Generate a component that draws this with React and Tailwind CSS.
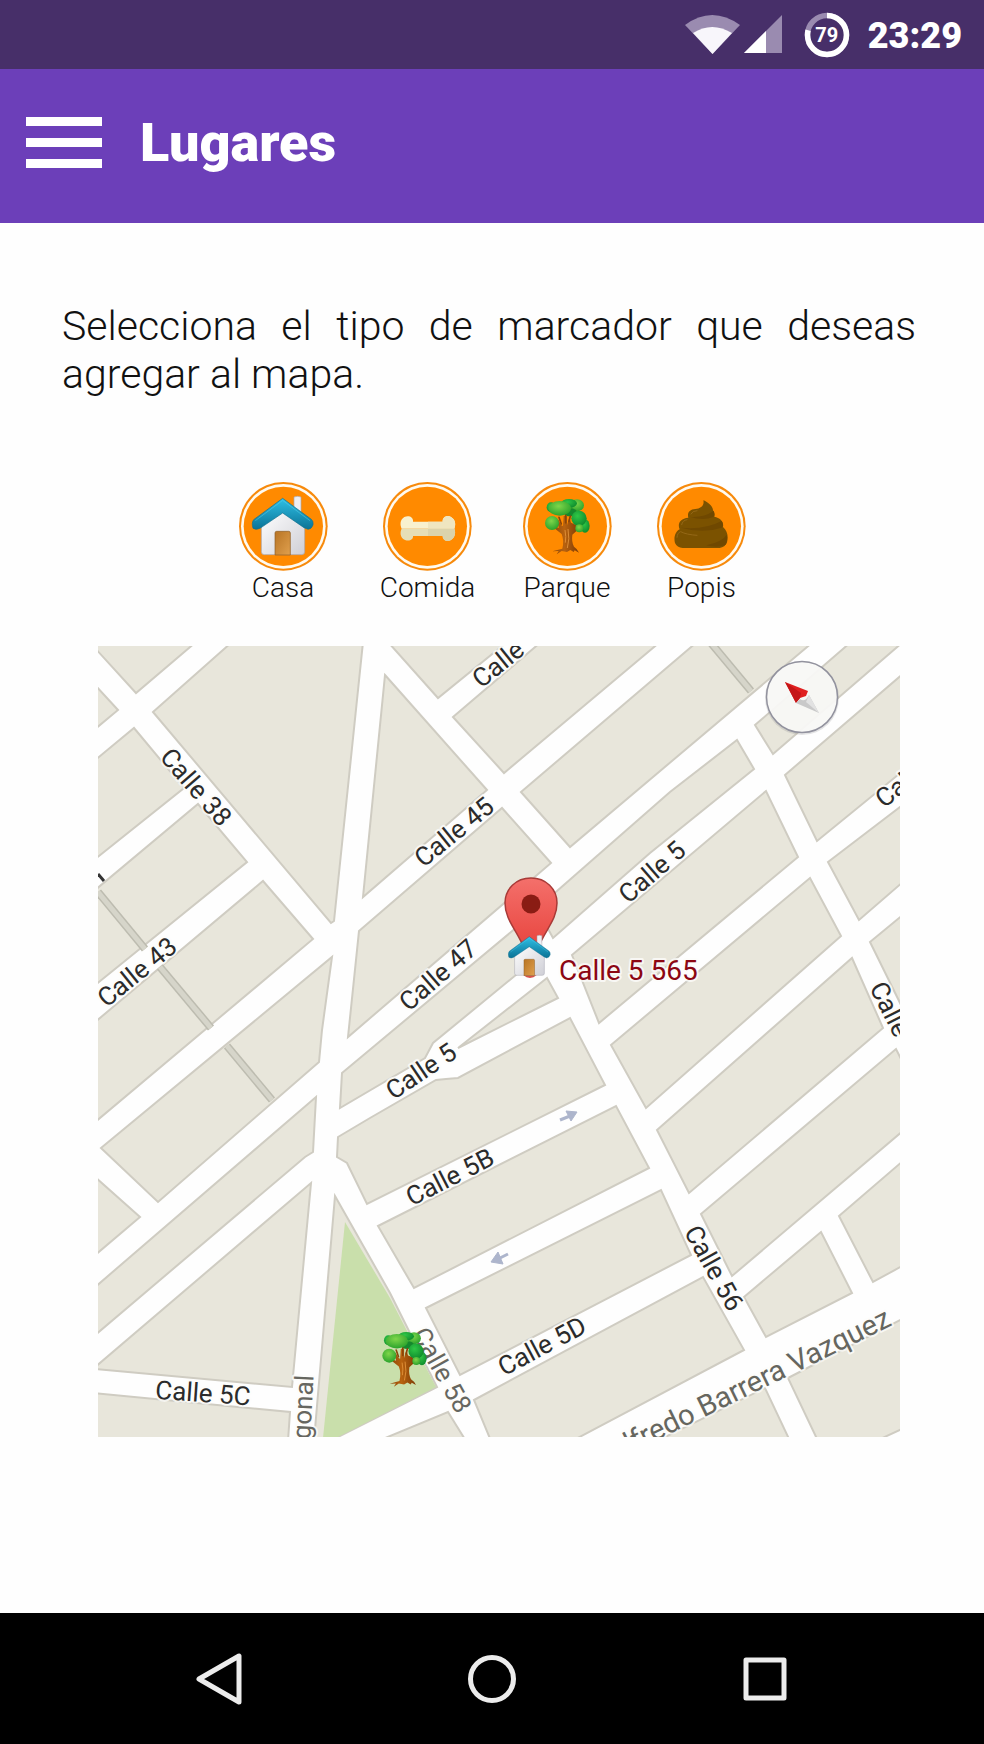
const BLOCKS = [
  '94,642 196,642 136,693 94,647',
  '94,684 118,710 94,730',
  '153,712 232,642 363,642 334,921 331,923',
  '94,761 134,728 184,788 94,860',
  '94,891 198,804 247,862 94,986',
  '94,1023 263,881 313,939 94,1123',
  '101,1148 332,957 322,1030 319,1062 158,1202',
  '94,1176 140,1217 94,1256',
  '94,1288 316,1097 313,1152 305,1157 94,1336',
  '94,1368 311,1183 292,1387 94,1369',
  '94,1393 290,1412 288,1441 94,1441',
  '335,1196 390,1293 437,1387 330,1441 314,1441',
  '385,675 487,790 363,897',
  '388,642 507,642 438,698',
  '453,717 541,642 660,642 504,773',
  '521,792 697,642 813,642 570,847',
  '359,931 502,808 551,863 348,1037',
  '536,907 557,891 670,792 737,740 754,769 650,853 553,938',
  '342,1073 517,927 528,965 433,1043 425,1058 340,1108',
  '458,1048 547,978 558,998',
  '338,1137 370,1118 436,1080 446,1079 458,1078 570,1018 605,1085 367,1204 347,1163 337,1157',
  '378,1226 616,1106 649,1168 414,1288',
  '426,1308 661,1190 691,1255 460,1375',
  '474,1400 703,1277 744,1350 572,1441 491,1441',
  '378,1441 448,1412 466,1441',
  '572,955 766,791 798,857 599,1023',
  '611,1045 810,878 841,936 646,1108',
  '657,1130 852,958 883,1028 689,1193',
  '701,1214 896,1049 904,1065 904,1130 732,1276',
  '744,1297 821,1232 852,1293 766,1337',
  '839,1216 904,1160 904,1265 873,1282',
  '788,1378 904,1318 904,1428 876,1441 818,1441',
  '657,1441 765,1388 790,1441',
  '755,725 851,642 903,642 773,754',
  '785,775 904,673 904,770 817,841',
  '828,862 904,804 904,881 859,920',
  '870,942 904,914 904,1011',
];

const RAILS = [
  [98, 892, 145, 949],
  [160, 967, 211, 1028],
  [227, 1046, 272, 1100],
  [711, 643, 751, 691],
];

const LABELS = [
  { text: 'Calle 38', x: 196, y: 787, angle: 49 },
  { text: 'Calle 43', x: 137, y: 972, angle: -39 },
  { text: 'Calle 45', x: 454, y: 832, angle: -39 },
  { text: 'Calle 47', x: 438, y: 975, angle: -41 },
  { text: 'Calle', x: 498, y: 664, angle: -39 },
  { text: 'Calle 5', x: 652, y: 872, angle: -41 },
  { text: 'Calle 5', x: 421, y: 1071, angle: -34 },
  { text: 'Calle 5B', x: 450, y: 1177, angle: -27 },
  { text: 'Calle 5D', x: 542, y: 1346, angle: -28 },
  { text: 'Calle 5C', x: 203, y: 1393, angle: 4 },
  { text: 'Calle 58', x: 442, y: 1370, angle: 61, soft: true },
  { text: 'Calle 56', x: 714, y: 1268, angle: 61 },
  { text: 'Calle', x: 890, y: 1009, angle: 63 },
  { text: 'Calle', x: 901, y: 784, angle: -38 },
  { text: 'gonal', x: 303, y: 1407, angle: -87, soft: true },
];

function Gradients() {
  return (
    <svg className="absolute h-0 w-0" aria-hidden="true">
      <defs>
        <linearGradient id="roof" x1="0" y1="0" x2="0" y2="1">
          <stop offset="0" stopColor="#2fc0e6" />
          <stop offset="1" stopColor="#0b7396" />
        </linearGradient>
        <linearGradient id="wall" x1="0" y1="0" x2="1" y2="1">
          <stop offset="0" stopColor="#ffffff" />
          <stop offset="1" stopColor="#cfcfd6" />
        </linearGradient>
        <linearGradient id="door" x1="0" y1="0" x2="1" y2="1">
          <stop offset="0" stopColor="#b87424" />
          <stop offset="1" stopColor="#e0a04e" />
        </linearGradient>
        <radialGradient id="leaf" cx=".45" cy=".35" r=".65">
          <stop offset="0" stopColor="#7fd64a" />
          <stop offset="1" stopColor="#2ba32c" />
        </radialGradient>
        <radialGradient id="leafDark" cx=".4" cy=".35" r=".7">
          <stop offset="0" stopColor="#2fc746" />
          <stop offset="1" stopColor="#0e8a2c" />
        </radialGradient>
        <linearGradient id="trunk" x1="0" y1="0" x2="1" y2="0">
          <stop offset="0" stopColor="#8a4508" />
          <stop offset=".45" stopColor="#b8620f" />
          <stop offset="1" stopColor="#7d3b05" />
        </linearGradient>
        <linearGradient id="pin" x1="0" y1="0" x2="0" y2="1">
          <stop offset="0" stopColor="#f4706b" />
          <stop offset="1" stopColor="#e8453f" />
        </linearGradient>
      </defs>
    </svg>
  );
}

function House() {
  return (
    <g>
      <path d="M222 111 Q232 107 243 111 V160 L222 142 Z" fill="#eeeef2" stroke="#a9a9b3" strokeWidth="2" />
      <path d="M124 198 L188 150 L254 200 V275 Q254 284 245 284 H133 Q124 284 124 275 Z" fill="url(#wall)" stroke="#a3a3ad" strokeWidth="2" />
      <path d="M165 285 V219 Q165 214 170 214 H206 Q211 214 211 219 V285 Z" fill="url(#door)" stroke="#8d5c24" strokeWidth="2" />
      <path
        d="M188 115 L274 178 Q281 184 279 195 Q274 208 264 208 L252 203 L188 159 L120 205 Q108 211 99 205 Q94 188 101 179 Z"
        fill="url(#roof)"
        stroke="#0f6f8e"
        strokeWidth="2"
        strokeLinejoin="round"
      />
      <path d="M106 182 L188 121 L270 182" fill="none" stroke="#5fd3ee" strokeWidth="2" opacity=".7" />
    </g>
  );
}

function Tree() {
  return (
    <g>
      <ellipse cx="260" cy="134" rx="21" ry="18" fill="url(#leaf)" />
      <ellipse cx="236" cy="128" rx="24" ry="13" fill="url(#leafDark)" />
      <ellipse cx="284" cy="196" rx="14" ry="20" fill="url(#leafDark)" />
      <ellipse cx="182" cy="140" rx="13" ry="15" fill="url(#leafDark)" />
      <ellipse cx="240" cy="155" rx="20" ry="12" fill="#15882d" />
      <path
        d="M216 264 Q222 240 214 220 L194 204 L192 197 L206 202 L200 182 L204 177 L213 194 L218 196 L220 166 L230 166 L230 194 L237 170 L242 186 L256 192 L262 208 L255 214 L246 222 Q243 244 251 258 Q261 264 266 276 L253 269 L250 274 L240 268 L230 274 L214 271 L199 281 L205 271 L186 272 Z"
        fill="url(#trunk)"
      />
      <path d="M233 205 Q239 235 231 262 M224 208 Q228 228 225 246" fill="none" stroke="#dd8d36" strokeWidth="3" />
      <ellipse cx="185" cy="187" rx="21" ry="21" fill="url(#leaf)" />
      <ellipse cx="208" cy="143" rx="34" ry="22" fill="url(#leaf)" />
      <ellipse cx="266" cy="173" rx="23" ry="23" fill="url(#leafDark)" />
      <circle cx="267" cy="203" r="12" fill="url(#leaf)" />
      <path d="M213 190 L206 170 M226 186 V164 M236 182 L240 166" fill="none" stroke="#8a4508" strokeWidth="5" strokeLinecap="round" />
    </g>
  );
}

function Bone() {
  return (
    <g>
      <path
        d="M579 183 H668 C667 168 683 162 693 169 C708 177 707 194 703 204 H545 C540 194 539 177 553 169 C566 163 581 169 579 183 Z"
        fill="#f8f1cf"
      />
      <path
        d="M579 226 H668 C668 241 684 244 693 238 C707 229 707 213 703 204 H545 C540 213 539 231 555 238 C568 243 580 237 579 226 Z"
        fill="#e6deb6"
      />
      <path d="M624 183 H668 C667 168 683 162 693 169 C708 177 707 194 703 204 H624 Z" fill="#efe6c0" />
      <path d="M624 226 H668 C668 241 684 244 693 238 C707 229 707 213 703 204 H624 Z" fill="#dbd3ab" />
    </g>
  );
}

function Popis() {
  return (
    <g>
      <path
        d="M641 119 C652 123 670 136 670 149 Q677 158 674 168 C692 172 703 183 700 199 C713 210 717 228 712 245 Q706 260 690 262 H579 Q562 261 556 247 C552 233 555 214 570 206 C563 190 570 173 596 171 C592 157 599 146 617 145 C632 144 645 135 641 119 Z"
        fill="#7b5200"
      />
      <path d="M600 168 Q640 172 672 151 Q677 162 671 169 Q640 181 600 168 Z M574 201 Q645 208 696 181 Q704 194 696 201 Q640 220 574 201 Z M650 254 Q700 242 711 222 Q715 244 706 254 Q680 262 650 254 Z" fill="#6f4800" />
      <path d="M604 160 Q608 150 622 150 M576 192 Q578 179 592 177 M562 230 Q563 216 573 213 Q590 222 622 224" fill="none" stroke="#946817" strokeWidth="3" strokeLinecap="round" />
    </g>
  );
}

const MARKERS = [
  { name: 'Casa', cx: 190, cy: 199, Icon: House, viewBox: '57 66 267 267' },
  { name: 'Comida', cx: 622, cy: 197, Icon: Bone, viewBox: '489 64 267 267' },
  { name: 'Parque', cx: 231, cy: 197, Icon: Tree, viewBox: '98 64 267 267' },
  { name: 'Popis', cx: 635, cy: 197, Icon: Popis, viewBox: '502 64 267 267' },
];

function MarkerButton({ name, cx, cy, Icon, viewBox }) {
  return (
    <button type="button" className="flex flex-col items-center">
      <svg viewBox={viewBox} className="size-[89px]" aria-hidden="true">
        <circle cx={cx} cy={cy} r="133" fill="#f78a0c" />
        <circle cx={cx} cy={cy} r="127" fill="#fffaf0" />
        <circle cx={cx} cy={cy} r="119" fill="#ff8a00" />
        <Icon />
      </svg>
      <span className="text-[28px] leading-[34px] font-light text-[#111]">{name}</span>
    </button>
  );
}

function StreetMap() {
  return (
    <svg viewBox="98 646 802 791" className="block h-auto w-full overflow-hidden font-[Roboto,sans-serif]" role="img" aria-label="Mapa">
      <rect x="98" y="646" width="802" height="791" fill="#fefefe" />
      {BLOCKS.map((points) => (
        <polygon key={points} points={points} fill="#e8e6db" stroke="#cfccc2" strokeWidth="2" />
      ))}
      <polygon points="345,1222 390,1298 436,1387 336,1438 323,1438" fill="#c9dfab" />
      {RAILS.map(([x1, y1, x2, y2]) => (
        <g key={x1}>
          <line x1={x1} y1={y1} x2={x2} y2={y2} stroke="#bdbcb0" strokeWidth="8" />
          <line x1={x1} y1={y1} x2={x2} y2={y2} stroke="#d6d5ca" strokeWidth="5" />
        </g>
      ))}
      <path d="M98 874 L104 881" stroke="#333" strokeWidth="3" />
      <g fill="#adb5cc" stroke="#adb5cc">
        <path d="M560 1120 L570 1116" strokeWidth="3" />
        <path d="M566 1111 L577 1112 L571 1121 Z" strokeWidth="1" />
        <path d="M508 1254 L498 1259" strokeWidth="3" />
        <path d="M498 1252 L491 1262 L503 1264 Z" strokeWidth="1" />
      </g>
      <g fontSize="26" textAnchor="middle" stroke="#fdfdfb" strokeOpacity=".8" strokeWidth="4" strokeLinejoin="round" paintOrder="stroke">
        {LABELS.map(({ text, x, y, angle, soft }) => (
          <text key={`${x}-${y}`} transform={`translate(${x} ${y}) rotate(${angle})`} y="9" fill={soft ? '#66665f' : '#2b2b2b'}>
            {text}
          </text>
        ))}
        <text transform="translate(893 1325) rotate(-26)" fontSize="29" textAnchor="end" fill="#66665f">
          lfredo Barrera Vazquez
        </text>
        <text x="559" y="980" fontSize="28" textAnchor="start" fill="#8c0713">
          Calle 5 565
        </text>
      </g>
      <g>
        <circle cx="530" cy="969" r="9" fill="#d9534b" />
        <path
          d="M531 878 C516 878 505 889 505 903 C505 920 517 930 524 948 H538 C545 930 557 920 557 903 C557 889 546 878 531 878 Z"
          fill="url(#pin)"
          stroke="#a83a37"
          strokeWidth="1.5"
        />
        <circle cx="531" cy="904" r="9.5" fill="#8a1c14" />
      </g>
      <g transform="translate(486.2 910.3) scale(.229)">
        <House />
      </g>
      <g transform="translate(328.2 1294) scale(.33)">
        <Tree />
      </g>
      <g>
        <circle cx="802" cy="698" r="37" fill="#77777f" opacity=".2" />
        <circle cx="802" cy="697" r="35.5" fill="#fafaf8" fillOpacity=".93" stroke="#92929e" strokeWidth="1.5" />
        <path d="M785 682 L808 691 L806 696 L800 698 L796 703 Z" fill="#e02020" />
        <path d="M785 682 L801 693 L800 698 L796 703 Z" fill="#c51618" />
        <path d="M809 695 L819 713 L796 703 L800 699 Q805 703 809 695 Z" fill="#c9c9c9" />
        <path d="M809 695 L819 713 L806 702 Z" fill="#e2e2e2" />
      </g>
    </svg>
  );
}

function StatusBar() {
  return (
    <div className="flex h-[69px] items-center justify-end bg-[#472f69] pr-[22px] text-white">
      <svg viewBox="0 0 55 39" className="mr-1 h-[39px] w-[55px]" aria-hidden="true">
        <path d="M0 10 Q27 -10 55 10 L27.500 39 Z" fill="#9a8bb0" />
        <path d="M8 18 Q27 6 47 18 L27.500 39 Z" fill="#f8f6fb" />
      </svg>
      <svg viewBox="0 0 38 39" className="mr-[22px] h-[39px] w-[38px]" aria-hidden="true">
        <path d="M38 0 V38 H0 Z" fill="#9a8bb0" />
        <path d="M22 16 V38 H0 Z" fill="#fff" />
      </svg>
      <div className="mr-[18px] grid size-[46px] place-items-center">
        <svg viewBox="0 0 46 46" className="col-start-1 row-start-1 size-[46px]" aria-hidden="true">
          <circle cx="23" cy="23" r="19.500" fill="none" stroke="#9a8bb0" strokeWidth="5.500" />
          <circle
            cx="23"
            cy="23"
            r="19.500"
            fill="none"
            stroke="#fff"
            strokeWidth="5.500"
            pathLength="100"
            strokeDasharray="79 21"
            transform="rotate(-90 23 23)"
          />
        </svg>
        <span className="col-start-1 row-start-1 text-[20px] leading-6 font-bold">79</span>
      </div>
      <span className="pt-0.5 text-[36px] leading-10 font-black">23:29</span>
    </div>
  );
}

export default function App() {
  return (
    <div className="flex min-h-screen flex-col bg-[#fefefe] font-[Roboto,sans-serif]">
      <Gradients />
      <StatusBar />
      <header className="flex h-[154px] items-center gap-[38px] bg-[#6c3fb9] pb-2 pl-[26px]">
        <button type="button" aria-label="Menú" className="flex w-[76px] flex-col gap-3">
          <span className="h-[9px] bg-white" />
          <span className="h-[9px] bg-white" />
          <span className="h-[9px] bg-white" />
        </button>
        <h1 className="pt-0.5 text-[54px] leading-[60px] font-black text-white">Lugares</h1>
      </header>
      <main className="flex-1 pt-[79px]">
        <p className="mr-[68px] ml-[62px] text-justify text-[41px] leading-[48px] font-light text-[#111]">
          Selecciona el tipo de marcador que deseas agregar al mapa.
        </p>
        <div className="mt-[84px] grid grid-cols-[146px_143px_136px_133px] justify-center pr-1.5">
          {MARKERS.map((marker) => (
            <MarkerButton key={marker.name} {...marker} />
          ))}
        </div>
        <div className="mt-[41px] mr-[84px] mb-10 ml-[98px]">
          <StreetMap />
        </div>
      </main>
      <nav className="grid h-[131px] grid-cols-[273px_273px_273px] items-center justify-center bg-black">
        <button type="button" aria-label="Atrás" className="flex justify-center">
          <svg viewBox="0 0 54 54" className="size-[54px]" fill="none" stroke="#ececec" strokeWidth="5" strokeLinejoin="round" aria-hidden="true">
            <path d="M47 4 V50 L7 27 Z" />
          </svg>
        </button>
        <button type="button" aria-label="Inicio" className="flex justify-center">
          <svg viewBox="0 0 54 54" className="size-[54px]" fill="none" stroke="#ececec" strokeWidth="5" aria-hidden="true">
            <circle cx="27" cy="27" r="21.500" />
          </svg>
        </button>
        <button type="button" aria-label="Recientes" className="flex justify-center">
          <svg viewBox="0 0 54 54" className="size-[54px]" fill="none" stroke="#ececec" strokeWidth="5" strokeLinejoin="round" aria-hidden="true">
            <rect x="8" y="8" width="38" height="38" />
          </svg>
        </button>
      </nav>
    </div>
  );
}
